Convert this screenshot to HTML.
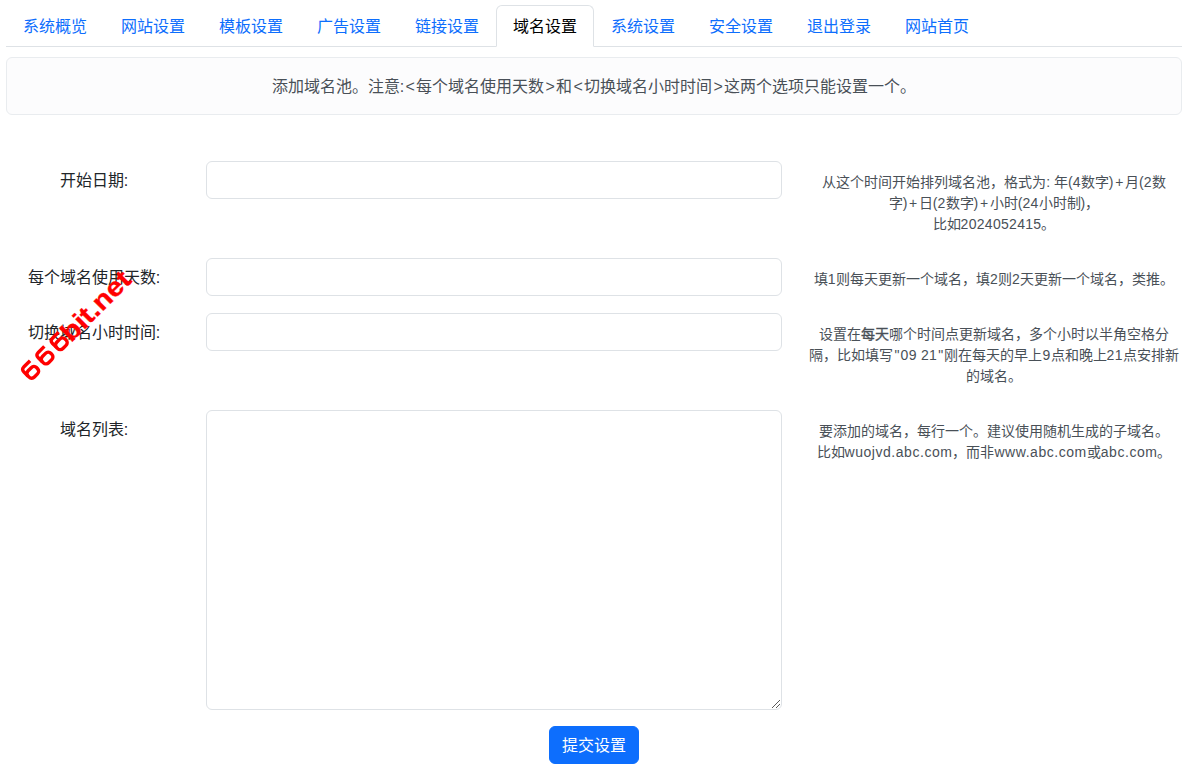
<!DOCTYPE html>
<html lang="zh-CN"><head><meta charset="utf-8">
<style>
*{box-sizing:border-box;margin:0;padding:0}
html,body{width:1187px;height:771px;overflow:hidden;background:#fff}
body{font-family:"Liberation Sans",sans-serif;font-size:16px;line-height:24px;color:#212529;position:relative}
.t{position:relative;top:1px}
b{font-weight:normal;-webkit-text-stroke:.35px #495057}
.nav{position:absolute;left:6px;top:5px;width:1176px;height:42px;border-bottom:1px solid #dee2e6;display:flex;list-style:none}
.nav a{display:block;padding:8px 16px;border:1px solid transparent;border-radius:6px 6px 0 0;color:#0d6efd;text-decoration:none;height:42px;white-space:nowrap}
.nav a.active{color:#000;background:#fff;border-color:#dee2e6 #dee2e6 #fff}
.alert{position:absolute;left:6px;top:57px;width:1176px;height:58px;padding:16px;border:1px solid #e9ecef;background:#fcfcfd;color:#495057;border-radius:6px;text-align:center;white-space:nowrap}
.lt{padding:0 1.35px}
.pl{padding:0 1.65px}
.q{padding:0 1.2px}
.d{letter-spacing:.3px}
.w{letter-spacing:.54px}
.lbl{position:absolute;left:6px;width:176px;text-align:center;white-space:nowrap}
.inp{position:absolute;left:206px;width:576px;height:38px;border:1px solid #dee2e6;border-radius:6px;background:#fff}
textarea.inp{resize:none;outline:none;font:inherit}
.help{position:absolute;left:806px;width:376px;font-size:14px;line-height:21px;color:#495057;text-align:center;white-space:nowrap}
.btn{position:absolute;left:549px;top:726px;width:90px;height:38px;background:#0d6efd;color:#fff;border-radius:6px;text-align:center;padding:6px 0;border:1px solid #0d6efd}
.wm{position:absolute;left:0;top:0;color:#f00;font-weight:bold;font-size:26px;line-height:26px;white-space:nowrap;transform-origin:0 0}
</style></head><body>
<ul class="nav">
<li><a><span class="t">系统概览</span></a></li>
<li><a><span class="t">网站设置</span></a></li>
<li><a><span class="t">模板设置</span></a></li>
<li><a><span class="t">广告设置</span></a></li>
<li><a><span class="t">链接设置</span></a></li>
<li><a class="active"><span class="t">域名设置</span></a></li>
<li><a><span class="t">系统设置</span></a></li>
<li><a><span class="t">安全设置</span></a></li>
<li><a><span class="t">退出登录</span></a></li>
<li><a><span class="t">网站首页</span></a></li>
</ul>
<div class="alert"><div class="t">添加域名池。注意:<span class="lt">&lt;</span>每个域名使用天数<span class="lt">&gt;</span>和<span class="lt">&lt;</span>切换域名小时时间<span class="lt">&gt;</span>这两个选项只能设置一个。</div></div>

<div class="lbl" style="top:169px">开始日期:</div>
<div class="inp" style="top:161px"></div>
<div class="help" style="top:172px">从这个时间开始排列域名池，格式为: 年(<span class="d">4</span>数字)<span class="pl">+</span>月(<span class="d">2</span>数<br>字)<span class="pl">+</span>日(<span class="d">2</span>数字)<span class="pl">+</span>小时(<span class="d">24</span>小时制)，<br>比如<span class="d">2024052415</span>。</div>

<div class="lbl" style="top:266px">每个域名使用天数:</div>
<div class="inp" style="top:258px"></div>
<div class="help" style="top:269px">填<span class="d">1</span>则每天更新一个域名，填<span class="d">2</span>则<span class="d">2</span>天更新一个域名，类推。</div>

<div class="lbl" style="top:321px">切换域名小时时间:</div>
<div class="inp" style="top:313px"></div>
<div class="help" style="top:324px">设置在<b>每天</b>哪个时间点更新域名，多个小时以半角空格分<br>隔，比如填写<span class="q">"</span><span class="d">09 21</span><span class="q">"</span>刚在每天的早上<span class="d">9</span>点和晚上<span class="d">21</span>点安排新<br>的域名。</div>

<div class="lbl" style="top:418px">域名列表:</div>
<textarea class="inp" style="top:410px;height:300px"></textarea>
<svg style="position:absolute;left:772px;top:700px" width="8" height="8" fill="#5a5a5a"><rect x="0" y="7" width="1" height="1"/><rect x="1" y="6" width="1" height="1"/><rect x="2" y="5" width="1" height="1"/><rect x="3" y="4" width="1" height="1"/><rect x="4" y="3" width="1" height="1"/><rect x="5" y="2" width="1" height="1"/><rect x="6" y="1" width="1" height="1"/><rect x="7" y="0" width="1" height="1"/><rect x="4" y="7" width="1" height="1"/><rect x="5" y="6" width="1" height="1"/><rect x="6" y="5" width="1" height="1"/><rect x="7" y="4" width="1" height="1"/></svg>
<div class="help" style="top:421px">要添加的域名，每行一个。建议使用随机生成的子域名。<br>比如<span class="w">wuojvd.abc.com</span>，而非<span class="w">www.abc.com</span>或<span class="w">abc.com</span>。</div>

<div class="btn"><span class="t">提交设置</span></div>

<svg style="position:absolute;left:0;top:0" width="200" height="420"><g transform="rotate(-45)" fill="none" stroke="#f00" stroke-width="3.4"><g transform="translate(-247.80,274.6)"><path d="M14.0 1.7H5.4Q1.7 1.7 1.7 5.4V11"/><rect x="1.7" y="7.5" width="12.0" height="8.8" rx="3.8" ry="3.6"/></g><g transform="translate(-227.60,274.6)"><path d="M14.0 1.7H5.4Q1.7 1.7 1.7 5.4V11"/><rect x="1.7" y="7.5" width="12.0" height="8.8" rx="3.8" ry="3.6"/></g><g transform="translate(-207.40,274.6)"><path d="M14.0 1.7H5.4Q1.7 1.7 1.7 5.4V11"/><rect x="1.7" y="7.5" width="12.0" height="8.8" rx="3.8" ry="3.6"/></g></g></svg>
<div class="wm" style="transform:translate(55.5px,327.5px) rotate(-45deg) scaleX(1.12);-webkit-text-stroke:.35px #f00">bit.net</div>
</body></html>
